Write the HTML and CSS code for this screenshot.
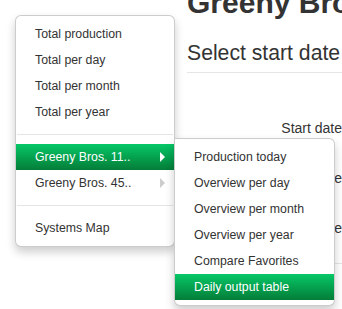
FILE: index.html
```html
<!DOCTYPE html>
<html>
<head>
<meta charset="utf-8">
<link rel="stylesheet" href="styles.css">
</head>
<body>
<div class="page">
  <h1 class="title">Greeny Bros. 11..</h1>
  <h3 class="subtitle">Select start date</h3>
  <div class="form">
    <div class="row"><span class="label">Start date</span></div>
    <div class="row"><span class="label">End date</span></div>
    <div class="row"><span class="label">Type</span></div>
    <div class="actions"></div>
  </div>
</div>

<ul class="menu main-menu">
  <li><a>Total production</a></li>
  <li><a>Total per day</a></li>
  <li><a>Total per month</a></li>
  <li><a>Total per year</a></li>
  <li class="divider"></li>
  <li class="has-sub open">
    <a class="active">Greeny Bros. 11..</a>
    <ul class="menu sub-menu">
      <li><a>Production today</a></li>
      <li><a>Overview per day</a></li>
      <li><a>Overview per month</a></li>
      <li><a>Overview per year</a></li>
      <li><a>Compare Favorites</a></li>
      <li><a class="active">Daily output table</a></li>
    </ul>
  </li>
  <li class="has-sub"><a>Greeny Bros. 45..</a></li>
  <li class="divider"></li>
  <li><a>Systems Map</a></li>
</ul>
</body>
</html>
```

FILE: styles.css
```css
html, body {
  margin: 0;
  padding: 0;
  background: #fff;
  overflow: hidden;
}
body {
  width: 342px;
  height: 309px;
  position: relative;
  font-family: "Liberation Sans", Arial, sans-serif;
  font-size: 14px;
  line-height: 20px;
  color: #333;
}
.page {
  padding-left: 187px;
  width: 155px;
}
.title {
  margin: -17px 0 0 0;
  font-size: 30px;
  line-height: 40px;
  font-weight: bold;
  white-space: nowrap;
  color: #333;
}
.subtitle {
  margin: 15px 0 0 0;
  font-size: 21.2px;
  line-height: 30px;
  font-weight: normal;
  white-space: nowrap;
  padding-bottom: 4px;
  border-bottom: 1px solid #e5e5e5;
}
.form {
  padding-top: 45px;
}
.row {
  height: 50px;
  display: flex;
  justify-content: flex-end;
}
.label {
  line-height: 20px;
  white-space: nowrap;
}
.actions {
  margin-top: -5px;
  border-top: 1px solid #e5e5e5;
}

.menu {
  list-style: none;
  margin: 0;
  padding: 5px 0;
  background: #fff;
  border: 1px solid rgba(0, 0, 0, 0.2);
  border-radius: 6px;
  box-shadow: 0 5px 10px rgba(0, 0, 0, 0.2);
  box-sizing: border-box;
  font-size: 12.3px;
}
.main-menu {
  position: absolute;
  left: 15px;
  top: 15px;
  width: 160px;
}
.menu li {
  display: block;
}
.menu a {
  display: block;
  padding: 3px 19px;
  line-height: 20px;
  color: #333;
  white-space: nowrap;
}
.menu a.active {
  color: #fff;
  background-image: linear-gradient(to bottom, #06c767, #047d38);
}
.divider {
  height: 1px;
  margin: 9px 1px;
  background: #e5e5e5;
}
.has-sub {
  position: relative;
}
.has-sub > a::after {
  content: "";
  float: right;
  width: 0;
  height: 0;
  margin-top: 5px;
  margin-right: -10px;
  border-style: solid;
  border-color: transparent;
  border-width: 5px 0 5px 5px;
  border-left-color: #ccc;
}
.has-sub > a.active::after {
  border-left-color: #fff;
}
.sub-menu {
  position: absolute;
  top: 0;
  left: 100%;
  margin-top: -6px;
  width: 161px;
  border-radius: 0 6px 6px 6px;
}
```
